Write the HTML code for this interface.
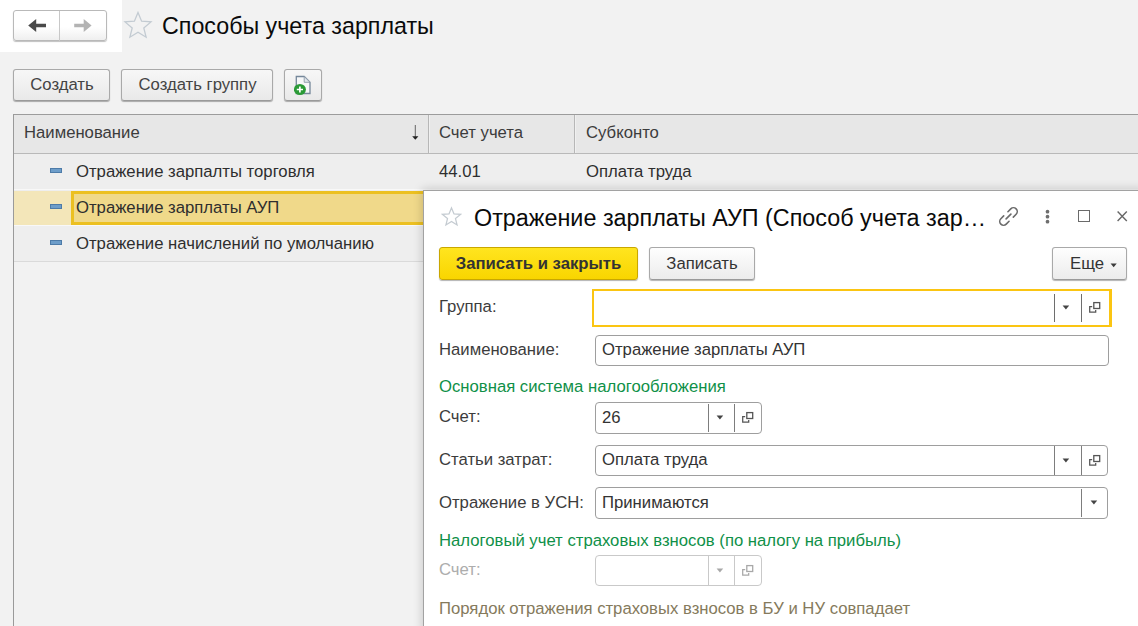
<!DOCTYPE html>
<html lang="ru">
<head>
<meta charset="utf-8">
<title>Способы учета зарплаты</title>
<style>
*{box-sizing:border-box;margin:0;padding:0}
html,body{width:1138px;height:626px;overflow:hidden}
body{background:#f2f2f2;font-family:"Liberation Sans",sans-serif;font-size:16.7px;color:#2e2e2e;position:relative}
.abs{position:absolute}
.t{position:absolute;white-space:nowrap;line-height:20px}
.btn{position:absolute;height:32px;border:1px solid #a9a9a9;border-bottom-color:#9a9a9a;border-radius:3px;background:linear-gradient(#f7f7f7,#e9e9e9);box-shadow:0 1px 1px rgba(0,0,0,.3);text-align:center;line-height:29px;color:#444;white-space:nowrap}
.btn.dl{background:linear-gradient(#fefefe,#ececec);color:#333}
.fld{position:absolute;height:31px;border:1px solid #9e9e9e;border-radius:4px;background:#fff}
.fld .v{position:absolute;left:6px;top:4px;line-height:20px;white-space:nowrap;color:#333}
.sep{position:absolute;top:3px;bottom:3px;width:1px;background:#7d7d7d}
.lbl{color:#3c3c3c}
.grn{color:#0f9048}
</style>
</head>
<body>
<svg width="0" height="0" style="position:absolute"><defs>
<symbol id="open" viewBox="0 0 14 14"><rect x="5.8" y="1.6" width="5.9" height="5.9" fill="#fff" stroke="currentColor" stroke-width="1.3"/><path d="M4.2 5.5 H1.7 V11.2 H7.7 V9" fill="none" stroke="currentColor" stroke-width="1.25"/></symbol>
<symbol id="tri" viewBox="0 0 8 5"><path d="M0.6 0.5 H7.2 L3.9 4.4 Z" fill="currentColor"/></symbol>
</defs></svg>
<!-- top-left white nav block -->
<div class="abs" style="left:0;top:0;width:122px;height:52px;background:#fff"></div>
<div class="abs" id="nav" style="left:13px;top:10px;width:94px;height:31px;border:1px solid #b9b9b9;border-radius:3px;background:linear-gradient(#ffffff 55%,#efefef);box-shadow:0 1px 1px rgba(0,0,0,.25)">
  <div class="abs" style="left:45px;top:0;width:1px;height:30px;background:#c8c8c8"></div>
  <svg class="abs" style="left:14px;top:7px" width="20" height="16" viewBox="0 0 20 16"><path d="M0.2 7.5 L8.2 1 L8.2 5.75 L18 5.75 L18 9.25 L8.2 9.25 L8.2 14 Z" fill="#4a4a4a"/></svg>
  <svg class="abs" style="left:59px;top:7px" width="20" height="16" viewBox="0 0 20 16"><path d="M18.6 7.5 L10.7 1 L10.7 5.75 L1.2 5.75 L1.2 9.25 L10.7 9.25 L10.7 14 Z" fill="#b3b3b3"/></svg>
</div>
<!-- star -->
<svg class="abs" style="left:123px;top:10px" width="30" height="30" viewBox="0 0 30 30"><path d="M15 2.5 L18.6 11.2 L28 11.9 L20.8 18 L23.1 27.2 L15 22.2 L6.9 27.2 L9.2 18 L2 11.9 L11.4 11.2 Z" fill="none" stroke="#c3cbd2" stroke-width="1.3" stroke-linejoin="miter"/></svg>
<div class="t" id="title" style="left:162px;top:11px;font-size:23.25px;line-height:30px;color:#0a0a0a">Способы учета зарплаты</div>

<!-- toolbar -->
<div class="btn" style="left:13px;top:69px;width:97px;padding-left:1px">Создать</div>
<div class="btn" style="left:121px;top:69px;width:152px;padding-left:1px">Создать группу</div>
<div class="btn" style="left:284px;top:69px;width:38px">
  <svg class="abs" style="left:9px;top:5px" width="20" height="22" viewBox="0 0 20 22"><path d="M2.3 1.5 H10.2 L16 7.3 V18.5 H2.3 Z" fill="#f6f7f8" stroke="#75879a" stroke-width="1.3"/><path d="M10.2 1.5 V7.3 H16 Z" fill="#dfe5ea" stroke="#8c9aa8" stroke-width="0.9"/><ellipse cx="5.9" cy="14.5" rx="6" ry="5.6" fill="#2a9a36"/><path d="M5.9 11.4 V17.6 M2.8 14.5 H9" stroke="#fff" stroke-width="1.7"/></svg>
</div>

<!-- table -->
<div class="abs" id="tbl" style="left:13px;top:114px;width:1125px;height:512px;border-left:1px solid #9a9a9a;border-top:1px solid #9c9c9c"></div>
<div class="abs" style="left:14px;top:115px;width:1124px;height:39px;background:#e7e7e7;border-bottom:1px solid #b9b9b9"></div>
<div class="abs" style="left:428px;top:115px;width:2px;height:38px;background:linear-gradient(90deg,#b7b7b7 50%,#f0f0f0 50%)"></div>
<div class="abs" style="left:574px;top:115px;width:2px;height:38px;background:linear-gradient(90deg,#b7b7b7 50%,#f0f0f0 50%)"></div>
<div class="t lbl" style="left:24px;top:123px">Наименование</div>
<div class="t lbl" style="left:439px;top:123px">Счет учета</div>
<div class="t lbl" style="left:586px;top:123px">Субконто</div>
<svg class="abs" style="left:409px;top:124px" width="12" height="18" viewBox="0 0 12 18"><path d="M6.3 1 V14" stroke="#666" stroke-width="1"/><path d="M3.2 12.2 L9.4 12.2 L6.3 15.8 Z" fill="#222"/></svg>

<!-- rows -->
<div class="abs" style="left:14px;top:154px;width:1124px;height:107px;background:#eeeeee"></div>
<div class="abs" style="left:14px;top:189px;width:1124px;height:1px;background:#f8f8f8"></div>
<div class="abs" style="left:14px;top:225px;width:1124px;height:1px;background:#f8f8f8"></div>
<div class="abs" style="left:14px;top:261px;width:1124px;height:1px;background:#dadada"></div>
<!-- selected row -->
<div class="abs" style="left:14px;top:191px;width:414px;height:34px;background:#f3e6b9"></div>
<div class="abs" style="left:71px;top:191px;width:357px;height:34px;background:#f0d98a;border:3px solid #ecc021"></div>

<div class="abs ico" style="left:50px;top:168px;width:12px;height:5px;background:#6d9dc9;border:1px solid #4d7ba8"></div>
<div class="abs ico" style="left:50px;top:204px;width:12px;height:5px;background:#6d9dc9;border:1px solid #4d7ba8"></div>
<div class="abs ico" style="left:50px;top:240px;width:12px;height:5px;background:#6d9dc9;border:1px solid #4d7ba8"></div>
<div class="t" style="left:76px;top:162px">Отражение зарпалты торговля</div>
<div class="t" style="left:76px;top:198px">Отражение зарплаты АУП</div>
<div class="t" style="left:76px;top:234px">Отражение начислений по умолчанию</div>
<div class="t" style="left:439px;top:162px">44.01</div>
<div class="t" style="left:586px;top:162px">Оплата труда</div>

<!-- dialog -->
<div class="abs" id="dlg" style="left:424px;top:191px;width:720px;height:440px;background:#fff;box-shadow:0 0 0 1px #a2a2a2,0 0 9px 2px rgba(0,0,0,.17)">
</div>
<svg class="abs" style="left:441px;top:206px" width="21" height="21" viewBox="0 0 20 20"><path d="M10 1.8 L12.4 7.6 L18.6 8 L13.8 12 L15.3 18.1 L10 14.8 L4.7 18.1 L6.2 12 L1.4 8 L7.6 7.6 Z" fill="#fff" stroke="#c4cbd1" stroke-width="1.2"/></svg>
<div class="t" id="dtitle" style="left:474px;top:203px;font-size:23.36px;line-height:30px;color:#0a0a0a">Отражение зарплаты АУП (Способ учета зар…</div>

<!-- dialog header icons -->
<svg class="abs" style="left:998px;top:206px" width="21" height="21" viewBox="0 0 21 21"><g transform="translate(10.5,10.5) rotate(-45)" fill="none" stroke="#6b6b6b" stroke-width="1.6" stroke-linecap="round"><path d="M3 -3.8 H7 A3.8 3.8 0 0 1 7 3.8 H3"/><path d="M-3 -3.8 H-7 A3.8 3.8 0 0 0 -7 3.8 H-3"/><path d="M-3.4 0 H3.4"/></g></svg>
<svg class="abs" style="left:1044px;top:208px" width="8" height="18" viewBox="0 0 8 18"><g fill="#6e6e6e"><circle cx="3.5" cy="3.7" r="1.85"/><circle cx="3.5" cy="8.7" r="1.85"/><circle cx="3.5" cy="13.7" r="1.85"/></g></svg>
<div class="abs" style="left:1077.5px;top:210px;width:12.6px;height:12px;border:1.3px solid #6a6a6a"></div>
<svg class="abs" style="left:1116px;top:210px" width="13" height="13" viewBox="0 0 13 13"><path d="M1.6 1.5 L10.8 10.9 M10.8 1.5 L1.6 10.9" stroke="#666" stroke-width="1.4"/></svg>

<!-- dialog buttons -->
<div class="btn" style="left:439px;top:247px;width:199px;height:33px;line-height:31px;background:linear-gradient(#ffe51f,#f9d500);border-color:#c9a700;font-weight:bold;color:#333">Записать и закрыть</div>
<div class="btn dl" style="left:649px;top:247px;width:106px;height:33px;line-height:31px">Записать</div>
<div class="btn dl" style="left:1052px;top:247px;width:75px;height:33px;line-height:31px;text-align:left;padding-left:17px">Еще<svg class="abs" style="left:57.2px;top:15.2px;color:#3c3c3c" width="7.5" height="4.7"><use href="#tri"/></svg></div>

<!-- fields -->
<div class="t lbl" style="left:439px;top:297px">Группа:</div>
<div class="fld" id="f1" style="left:592px;top:289px;width:520px;height:38px;border:2px solid #fbc512;border-right-width:3px;border-radius:0">
  <div class="sep" style="left:460px;top:3px;bottom:3px;background:#6e6e6e"></div><div class="sep" style="left:487px;top:3px;bottom:3px;background:#6e6e6e"></div>
  <svg class="abs" style="left:468.3px;top:14px;color:#444" width="8" height="5"><use href="#tri"/></svg>
  <svg class="abs" style="left:494px;top:10px;color:#555" width="14" height="14"><use href="#open"/></svg>
</div>
<div class="t lbl" style="left:439px;top:340px">Наименование:</div>
<div class="fld" style="left:595px;top:335px;width:514px"><div class="v">Отражение зарплаты АУП</div></div>

<div class="t grn" style="left:439px;top:377px">Основная система налогообложения</div>

<div class="t lbl" style="left:439px;top:407px">Счет:</div>
<div class="fld" style="left:595px;top:402px;width:167px;height:32px"><div class="v" style="top:5px">26</div>
  <div class="sep" style="left:112px;top:1px;bottom:1px"></div><div class="sep" style="left:138px;top:1px;bottom:1px"></div>
  <svg class="abs" style="left:120.3px;top:11.9px;color:#444" width="8" height="5"><use href="#tri"/></svg>
  <svg class="abs" style="left:144.8px;top:7.9px;color:#555" width="14" height="14"><use href="#open"/></svg>
</div>

<div class="t lbl" style="left:439px;top:450px">Статьи затрат:</div>
<div class="fld" style="left:595px;top:445px;width:513px"><div class="v">Оплата труда</div>
  <div class="sep" style="left:458px;top:0;bottom:0"></div><div class="sep" style="left:485px;top:0;bottom:0"></div>
  <svg class="abs" style="left:466.4px;top:12px;color:#444" width="8" height="5"><use href="#tri"/></svg>
  <svg class="abs" style="left:491.8px;top:8px;color:#555" width="14" height="14"><use href="#open"/></svg>
</div>

<div class="t lbl" style="left:439px;top:493px">Отражение в УСН:</div>
<div class="fld" style="left:595px;top:487px;width:513px;height:32px"><div class="v" style="top:5px">Принимаются</div>
  <div class="sep" style="left:485px;top:1px;bottom:1px"></div>
  <svg class="abs" style="left:493.6px;top:11.8px;color:#444" width="8" height="5"><use href="#tri"/></svg>
</div>

<div class="t grn" style="left:439px;top:531px">Налоговый учет страховых взносов (по налогу на прибыль)</div>

<div class="t" style="left:439px;top:560px;color:#adadad">Счет:</div>
<div class="fld" style="left:595px;top:555px;width:167px;border-color:#c9c9c9">
  <div class="sep" style="left:112px;top:0;bottom:0;background:#c9c9c9"></div><div class="sep" style="left:138px;top:0;bottom:0;background:#c9c9c9"></div>
  <svg class="abs" style="left:120.3px;top:11.9px;color:#a8a8a8" width="8" height="5"><use href="#tri"/></svg>
  <svg class="abs" style="left:144.8px;top:7.9px;color:#a8a8a8" width="14" height="14"><use href="#open"/></svg>
</div>

<div class="t" style="left:439px;top:599px;color:#857a5c">Порядок отражения страховых взносов в БУ и НУ совпадает</div>
</body>
</html>
